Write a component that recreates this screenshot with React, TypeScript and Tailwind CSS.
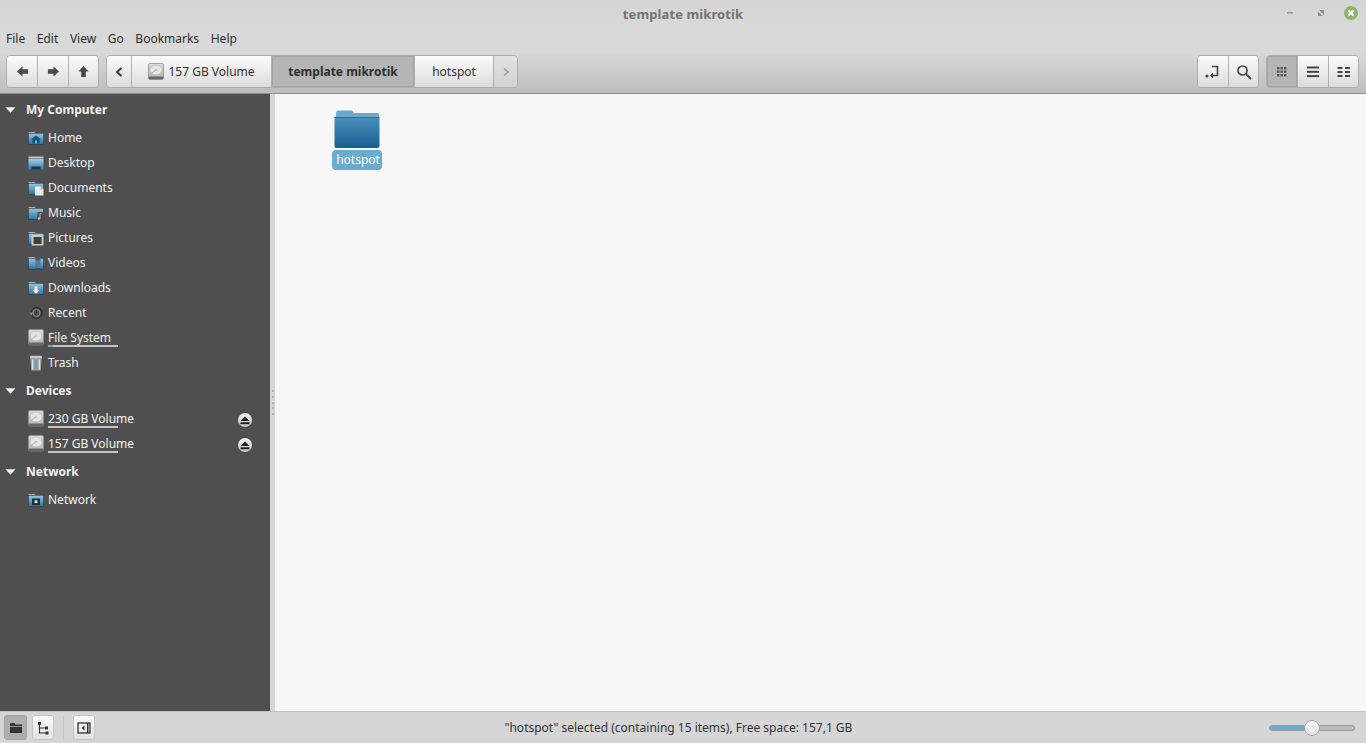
import React from "react";

const font = "font-['Noto_Sans','Open_Sans',sans-serif]";

function Arrow({ rot = 0 }: { rot?: number }) {
  return (
    <svg width="13" height="13" viewBox="0 0 14 14" style={{ transform: `rotate(${rot}deg)` }}>
      <path d="M1 7 L7 1.5 V4.5 H13 V9.5 H7 V12.5 Z" fill="#4a4a4a" />
    </svg>
  );
}

function Seg({ children, w, pressed, last }: { children: React.ReactNode; w: string; pressed?: boolean; last?: boolean }) {
  return (
    <div
      className={`${w} h-full flex items-center justify-center ${last ? "" : "border-r border-[#b0b0b0]"} ${
        pressed
          ? "bg-[#b5b5b5] shadow-[inset_0_0_0_1px_#a4a4a4]"
          : "bg-linear-to-b from-[#fbfbfb] to-[#dcdcdc]"
      }`}
    >
      {children}
    </div>
  );
}

function Group({ children }: { children: React.ReactNode }) {
  return <div className="flex h-[33px] border border-[#adadad] rounded-[4px] overflow-hidden shrink-0">{children}</div>;
}

function Drive({ id }: { id: string }) {
  return (
    <svg width="16" height="17" viewBox="0 0 16 17">
      <defs>
        <linearGradient id={id} x1="0" y1="0" x2="0" y2="1">
          <stop offset="0" stopColor="#dcdcdc" />
          <stop offset="1" stopColor="#b4b4b4" />
        </linearGradient>
      </defs>
      <rect x="0.5" y="0.5" width="15" height="15.5" rx="1.5" fill={`url(#${id})`} stroke="#8e8e8e" strokeWidth="0.8" />
      <ellipse cx="8" cy="7" rx="6" ry="5" fill="#e6e6e6" stroke="#b2b2b2" strokeWidth="0.6" />
      <ellipse cx="8" cy="7" rx="1.6" ry="1.3" fill="#c6c6c6" />
      <path d="M2.5 11 L7 7.5" stroke="#a2a2a2" strokeWidth="0.8" />
      <rect x="0.5" y="13.5" width="15" height="3" rx="1" fill="#686868" />
    </svg>
  );
}

function PlaceFolder({ id, children }: { id: string; children?: React.ReactNode }) {
  return (
    <svg width="16" height="16" viewBox="0 0 16 16">
      <defs>
        <linearGradient id={id} x1="0" y1="0" x2="0" y2="1">
          <stop offset="0" stopColor="#93c5e0" />
          <stop offset="1" stopColor="#2a72a3" />
        </linearGradient>
      </defs>
      <path d="M0.5 2 H6.5 L7.5 3 H15.5 V5 H0.5 Z" fill="#b4b4b4" />
      <rect x="0.3" y="3.6" width="15.4" height="11" fill={`url(#${id})`} stroke="#333" strokeWidth="0.6" />
      {children}
    </svg>
  );
}

const icons: Record<string, React.ReactNode> = {
  Home: (
    <PlaceFolder id="h">
      <path d="M3 9.5 L8 5.5 L13 9.5 H11.5 V13.5 H4.5 V9.5 Z" fill="#14537d" />
      <rect x="7" y="10.5" width="2" height="3" fill="#7fb3d1" />
    </PlaceFolder>
  ),
  Desktop: (
    <svg width="16" height="16" viewBox="0 0 16 16">
      <defs>
        <linearGradient id="d" x1="0" y1="0" x2="0" y2="1">
          <stop offset="0" stopColor="#a5cde3" />
          <stop offset="1" stopColor="#2f78a8" />
        </linearGradient>
      </defs>
      <rect x="0.5" y="1.5" width="15" height="2" fill="#c6c6c6" />
      <rect x="0.5" y="4" width="15" height="10.5" fill="url(#d)" />
      <rect x="3.5" y="11.5" width="9" height="3" fill="#14384f" />
    </svg>
  ),
  Documents: (
    <PlaceFolder id="doc">
      <path d="M7 6.5 H12.5 L15.5 9.5 V15.5 H7 Z" fill="#ececec" />
      <path d="M12.5 6.5 V9.5 H15.5 Z" fill="#bdbdbd" />
    </PlaceFolder>
  ),
  Music: (
    <PlaceFolder id="m">
      <path d="M9.5 7 H15 V15.5 H9 Z" fill="#4b4b4b" />
      <circle cx="11" cy="13.5" r="1.2" fill="#cfcfcf" />
      <path d="M12 13.5 V8.5 H13.5" stroke="#cfcfcf" strokeWidth="0.8" fill="none" />
    </PlaceFolder>
  ),
  Pictures: (
    <PlaceFolder id="p">
      <rect x="3.5" y="4.5" width="12" height="11" rx="0.5" fill="#c8c8c8" />
      <rect x="5.5" y="7" width="8" height="7" fill="#3e3d2e" />
    </PlaceFolder>
  ),
  Videos: (
    <PlaceFolder id="v">
      <rect x="7.5" y="4" width="5" height="10.4" fill="#2f5873" />
      <path d="M7.5 6 H12.5 M7.5 8 H12.5 M7.5 10 H12.5 M7.5 12 H12.5" stroke="#9fc4da" strokeWidth="0.7" />
    </PlaceFolder>
  ),
  Downloads: (
    <PlaceFolder id="dl">
      <path d="M6.5 6.5 H9.5 V10 H11.5 L8 14 L4.5 10 H6.5 Z" fill="#f0f0f0" />
    </PlaceFolder>
  ),
  Recent: (
    <svg width="16" height="16" viewBox="0 0 16 16" fill="none">
      <circle cx="8.5" cy="8" r="5.5" stroke="#2e2e2e" strokeWidth="1.3" />
      <circle cx="8.5" cy="8" r="3.5" stroke="#8e8e8e" strokeWidth="1" />
      <path d="M1 7.5 L3.5 10.5 L5.2 7.5 Z" fill="#8a8a8a" />
      <path d="M8.5 5.5 V8.5 L6.5 10" stroke="#2e2e2e" strokeWidth="1" />
    </svg>
  ),
  Trash: (
    <svg width="16" height="16" viewBox="0 0 16 16">
      <rect x="2" y="0.8" width="12" height="3" rx="1.4" fill="#c8c8c8" />
      <path d="M2.5 3 H13.5 L12.8 15.5 H3.2 Z" fill="#a4a4a4" />
      <rect x="6.6" y="4.5" width="2.8" height="10" fill="#6f9fbe" />
      <rect x="4" y="4.5" width="1.2" height="10" fill="#e4e4e4" />
      <rect x="10.8" y="4.5" width="1.2" height="10" fill="#e4e4e4" />
    </svg>
  ),
  Network: (
    <PlaceFolder id="n">
      <rect x="4" y="6.5" width="8" height="6.5" fill="#1f2f3a" />
      <rect x="6.6" y="8.3" width="2.8" height="2.8" fill="#e8e8e8" />
    </PlaceFolder>
  ),
};

function Row({ label, usage, eject }: { label: string; usage?: boolean; eject?: boolean }) {
  return (
    <div className="h-[25px] relative flex items-center pl-[28px]">
      <span className="w-[20px] h-[20px] flex items-center justify-start shrink-0">
        {usage ? <Drive id={`dr-${label.replace(/ /g, "")}`} /> : icons[label]}
      </span>
      <span className="text-[12px] text-[#f2f2f2] leading-none">{label}</span>
      {usage && (
        <div className="absolute left-[48px] top-[20px] w-[70px] h-[2px] bg-[#c4c4c4]">
          {label === "File System" && <div className="w-[5px] h-full bg-[#6aabd0]" />}
        </div>
      )}
      {eject && (
        <span className="absolute left-[238px] top-[7px] w-[14px] h-[14px] rounded-full bg-linear-to-b from-[#f0f0f0] to-[#c8c8c8] flex items-center justify-center">
          <svg width="10" height="9" viewBox="0 0 10 9">
            <path d="M5 0.5 L9.5 5 H0.5 Z M0.5 6.3 H9.5 V8.3 H0.5 Z" fill="#222" />
          </svg>
        </span>
      )}
    </div>
  );
}

function Header({ label }: { label: string }) {
  return (
    <div className="h-[25px] flex items-center relative mt-[3px] mb-[3px]">
      <svg className="absolute left-[5px] top-[10px]" width="11" height="6" viewBox="0 0 11 6">
        <path d="M0.5 0.3 H10.5 L5.5 5.8 Z" fill="#f2f2f2" />
      </svg>
      <span className="ml-[26px] text-[12px] font-bold text-[#f2f2f2] leading-none">{label}</span>
    </div>
  );
}

export default function App() {
  return (
    <div className={`${font} w-[1366px] h-[743px] flex flex-col overflow-hidden bg-[#d6d6d6] text-[#2c2c2c]`}>
      {/* Title bar */}
      <div className="h-[26px] shrink-0 relative flex items-center justify-center pt-[3px] bg-linear-to-b from-[#d4d4d4] to-[#d9d9d9]">
        <span className="text-[13px] font-bold text-[#737373] tracking-[0.1px]">template mikrotik</span>
        <div className="absolute right-[8px] top-[6px] flex items-center gap-[16px]">
          <svg width="14" height="14" viewBox="0 0 14 14"><rect x="3" y="6" width="6" height="1.6" fill="#9a9a9a" /></svg>
          <svg width="14" height="14" viewBox="0 0 14 14"><path d="M5 4 H10 V9 Z M4 5.5 L8.5 10 H4 Z" fill="#8f8f8f" /></svg>
          <svg width="14" height="14" viewBox="0 0 14 14">
            <circle cx="7" cy="7" r="7" fill="#8fb36c" />
            <path d="M4.5 4.5 L9.5 9.5 M9.5 4.5 L4.5 9.5" stroke="#fff" strokeWidth="2" />
          </svg>
        </div>
      </div>

      {/* Menu bar */}
      <div className="h-[26px] shrink-0 flex items-center pl-[6px] gap-[11.6px] text-[12px] text-[#2e2e2e] bg-[#d9d9d9]">
        <span>File</span>
        <span>Edit</span>
        <span>View</span>
        <span>Go</span>
        <span>Bookmarks</span>
        <span>Help</span>
      </div>

      {/* Toolbar */}
      <div className="h-[42px] shrink-0 flex items-start pt-[3px] pl-[6px] pr-[7px] bg-linear-to-b from-[#d9d9d9] to-[#bdbdbd] border-b border-[#8f8f8f]">
        <Group>
          <Seg w="w-[31px]"><Arrow /></Seg>
          <Seg w="w-[31px]"><Arrow rot={180} /></Seg>
          <Seg w="w-[29px]" last><Arrow rot={90} /></Seg>
        </Group>
        <div className="w-[7px]" />
        <Group>
          <Seg w="w-[25px]">
            <svg width="10" height="12" viewBox="0 0 10 12"><path d="M7.5 2 L3 6 L7.5 10" fill="none" stroke="#333" strokeWidth="1.8" /></svg>
          </Seg>
          <Seg w="w-[140px]">
            <span className="flex items-center gap-[4px] text-[12px] text-[#333]">
              <Drive id="dr-path" />
              157 GB Volume
            </span>
          </Seg>
          <Seg w="w-[143px]" pressed>
            <span className="text-[12px] font-bold text-[#2e2e2e]">template mikrotik</span>
          </Seg>
          <Seg w="w-[79px]"><span className="text-[12px] text-[#333]">hotspot</span></Seg>
          <div className="w-[23px] h-full flex items-center justify-center bg-linear-to-b from-[#e2e2e2] to-[#d2d2d2]">
            <svg width="8" height="10" viewBox="0 0 8 10"><path d="M2 1.5 L6 5 L2 8.5" fill="none" stroke="#9a9a9a" strokeWidth="1.5" /></svg>
          </div>
        </Group>
        <div className="flex-1" />
        <Group>
          <Seg w="w-[31px]">
            <svg width="18" height="16" viewBox="0 0 18 16" fill="none">
              <circle cx="3" cy="12" r="1.6" fill="#444" />
              <path d="M8 2.5 H13.5 V11.5 H7" stroke="#444" strokeWidth="1.6" />
              <path d="M9 8.5 L6 11.5 L9 14.5 Z" fill="#444" />
            </svg>
          </Seg>
          <Seg w="w-[29px]" last>
            <svg width="16" height="16" viewBox="0 0 16 16" fill="none">
              <circle cx="6.5" cy="6.5" r="4.5" stroke="#444" strokeWidth="1.7" />
              <path d="M10 10 L15 15" stroke="#444" strokeWidth="2" />
            </svg>
          </Seg>
        </Group>
        <div className="w-[7px]" />
        <Group>
          <Seg w="w-[31px]" pressed>
            <svg width="12" height="12" viewBox="0 0 12 12" fill="#555">
              {[1, 4.5, 8].map((x) => [1, 4.5, 8].map((y) => <rect key={`${x}-${y}`} x={x} y={y} width="2.4" height="2.4" />))}
            </svg>
          </Seg>
          <Seg w="w-[31px]">
            <svg width="14" height="12" viewBox="0 0 14 12" fill="#444"><rect x="1" y="0.5" width="12" height="2" /><rect x="1" y="4.8" width="12" height="2" /><rect x="1" y="9.1" width="12" height="2" /></svg>
          </Seg>
          <Seg w="w-[29px]" last>
            <svg width="14" height="12" viewBox="0 0 14 12" fill="#444">
              <rect x="0.5" y="1" width="5" height="2" /><rect x="8" y="1" width="5" height="2" />
              <rect x="0.5" y="5" width="5" height="2" /><rect x="8" y="5" width="5" height="2" />
              <rect x="0.5" y="9" width="5" height="2" /><rect x="8" y="9" width="5" height="2" />
            </svg>
          </Seg>
        </Group>
      </div>

      {/* Body */}
      <div className="flex-1 min-h-0 flex">
        <div className="w-[270px] shrink-0 bg-[#4f4f4f]">
          <Header label="My Computer" />
          {["Home", "Desktop", "Documents", "Music", "Pictures", "Videos", "Downloads", "Recent"].map((l) => (
            <Row key={l} label={l} />
          ))}
          <Row label="File System" usage />
          <Row label="Trash" />
          <Header label="Devices" />
          <Row label="230 GB Volume" usage eject />
          <Row label="157 GB Volume" usage eject />
          <Header label="Network" />
          <Row label="Network" />
        </div>
        <div className="w-[5px] shrink-0 bg-[#d6d6d6] flex flex-col items-center justify-center gap-[3.6px]">
          {[0, 1, 2, 3, 4].map((i) => (
            <span key={i} className="w-[2px] h-[2px] bg-[#b0b0b0]" />
          ))}
        </div>
        <div className="flex-1 bg-[#f7f7f7] pl-[57px] pt-[15px]">
          <div className="w-[50px] flex flex-col items-center">
            <svg width="48" height="41" viewBox="0 0 48 41">
              <defs>
                <linearGradient id="f" x1="0" y1="0" x2="0" y2="1">
                  <stop offset="0" stopColor="#4a8fbc" />
                  <stop offset="1" stopColor="#1a5f92" />
                </linearGradient>
              </defs>
              <path d="M3 4 Q3 1.5 5 1.5 H19 L21 4 H45 Q46 4 46 6 V12 H3 Z" fill="#6ea9cd" />
              <path d="M1.5 9 Q1.5 8 3 8 H45 Q46.5 8 46.5 9.5 V37 Q46.5 39 44.5 39 H3.5 Q1.5 39 1.5 37 Z" fill="url(#f)" />
              <path d="M1.5 8.5 H46.5" stroke="#2f6a94" strokeWidth="1" />
            </svg>
            <span className="w-[50px] h-[20px] rounded-[4px] bg-[#6aabd0] text-[#fff] text-[12px] leading-[19px] text-center pl-[2px]">hotspot</span>
          </div>
        </div>
      </div>

      {/* Status bar */}
      <div className="h-[32px] shrink-0 relative flex items-center border-t border-[#c2c2c2] bg-[#d6d6d6] pl-[4px]">
        <div className="w-[23px] h-[25px] rounded-[3px] bg-[#aeaeae] border border-[#a2a2a2] flex items-center justify-center">
          <svg width="14" height="12" viewBox="0 0 14 12"><path d="M1 1 H5.5 L6.5 2.5 H13 V11 H1 Z" fill="#333" /><rect x="1" y="4" width="12" height="0.8" fill="#aeaeae" /></svg>
        </div>
        <div className="ml-[5px] w-[22px] h-[25px] rounded-[3px] bg-linear-to-b from-[#fbfbfb] to-[#e2e2e2] border border-[#c4c4c4] flex items-center justify-center">
          <svg width="14" height="14" viewBox="0 0 14 14" fill="none">
            <path d="M3.5 2 V12 H12 M3.5 7 H11" stroke="#333" strokeWidth="1.1" />
            <rect x="2" y="0.8" width="3" height="3" fill="#333" />
            <rect x="9" y="5.5" width="3" height="3" fill="#333" />
            <rect x="9.5" y="10.5" width="3" height="3" fill="#333" />
          </svg>
        </div>
        <div className="ml-[9px] w-px h-[24px] bg-[#c4c4c4]" />
        <div className="ml-[9px] w-[22px] h-[25px] rounded-[3px] bg-linear-to-b from-[#fbfbfb] to-[#e2e2e2] border border-[#c4c4c4] flex items-center justify-center">
          <svg width="14" height="12" viewBox="0 0 14 12" fill="none">
            <rect x="1" y="1" width="12" height="10" stroke="#333" strokeWidth="1.3" />
            <rect x="10" y="1" width="1.5" height="10" fill="#333" />
            <path d="M7.5 3.5 L4.5 6 L7.5 8.5 Z" fill="#333" />
          </svg>
        </div>
        <span className="flex-1 text-center text-[12px] text-[#333] pr-[7px]">"hotspot" selected (containing 15 items), Free space: 157,1 GB</span>
        <div className="w-[86px] mr-[11px] relative h-[6px] rounded-full bg-[#bcbcbc] border border-[#9c9c9c]">
          <div className="w-[36px] h-full rounded-l-full bg-[#6aabd0]" />
          <span className="absolute left-[34px] top-[-6px] w-[16px] h-[16px] rounded-full bg-linear-to-b from-[#ffffff] to-[#e6e6e6] border border-[#a5a5a5]" />
        </div>
      </div>
    </div>
  );
}
